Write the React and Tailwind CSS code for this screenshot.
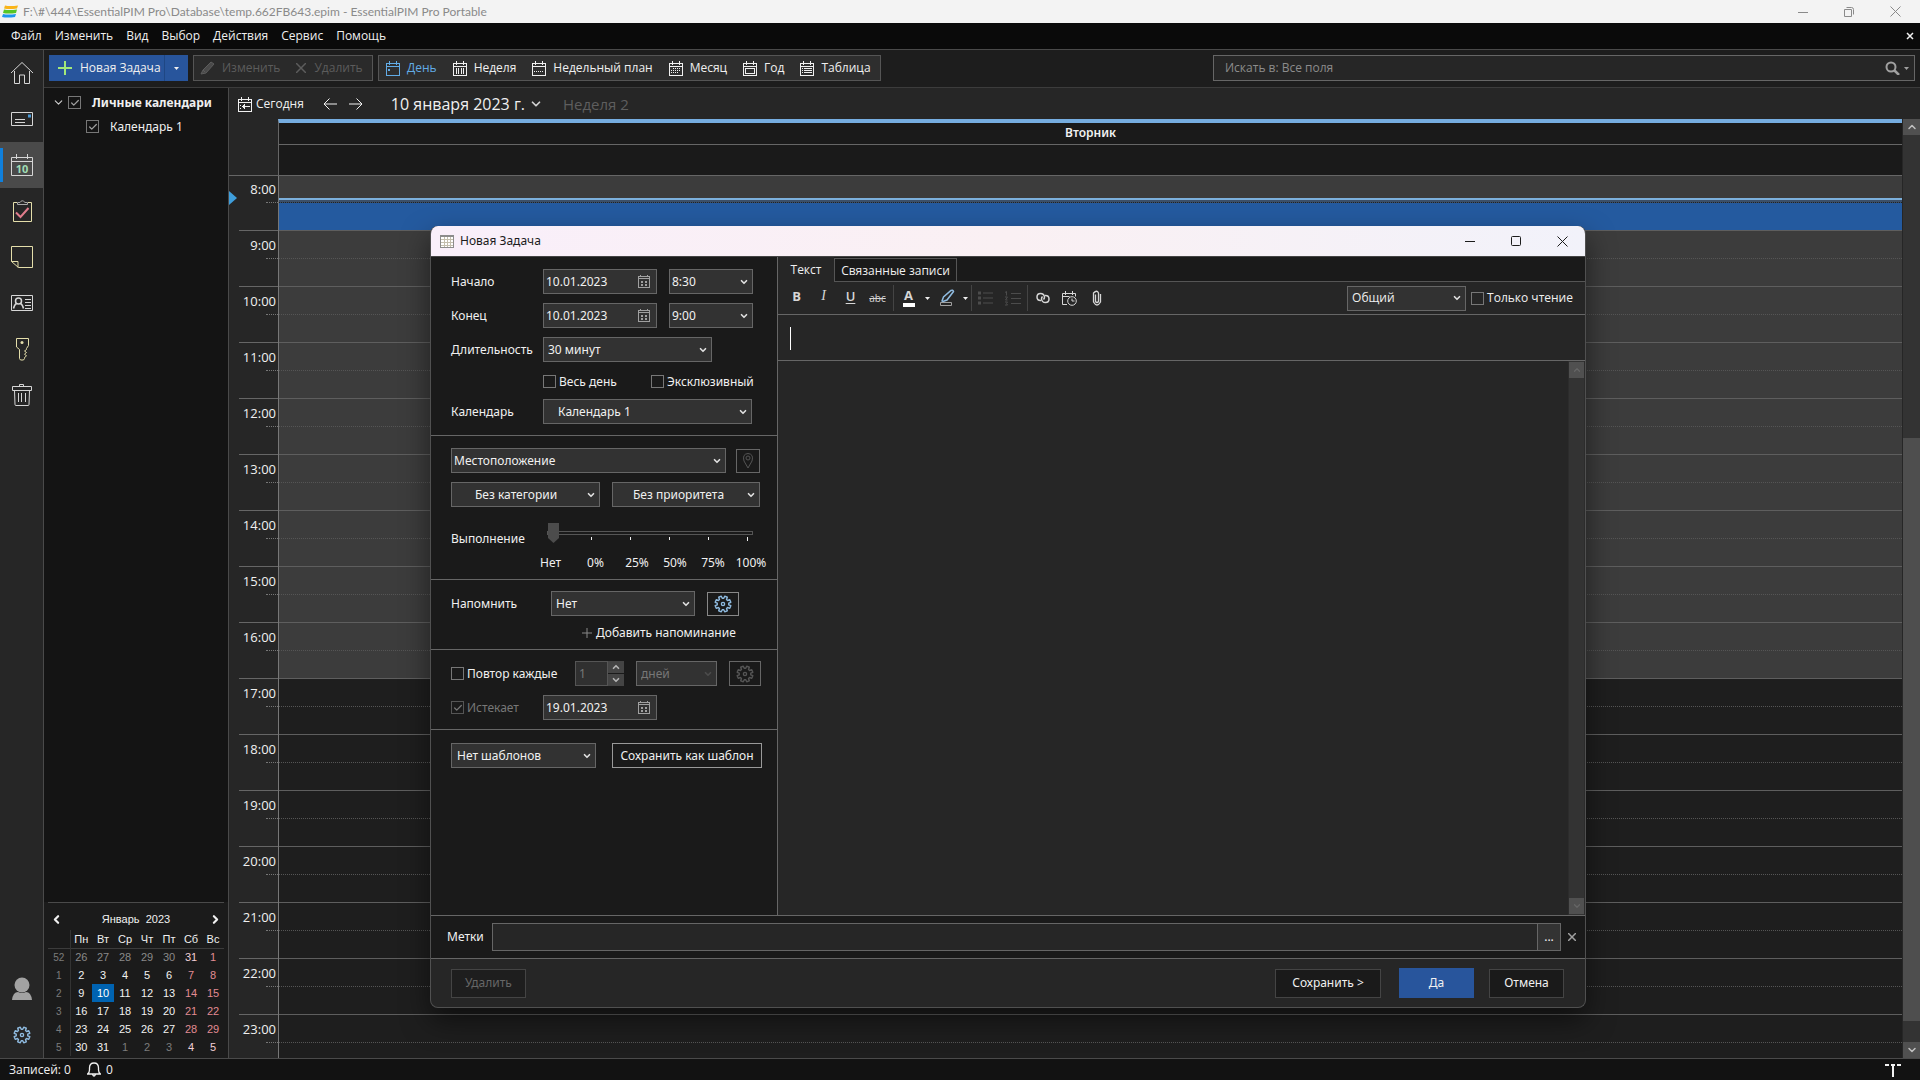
import React, { useState } from "react";
import { Check, ChevronDown, ChevronLeft, ChevronRight, ChevronUp } from "lucide-react";

const MENU = ["Файл", "Изменить", "Вид", "Выбор", "Действия", "Сервис", "Помощь"];

const VIEWS = [
  { id: "day", label: "День" },
  { id: "week", label: "Неделя" },
  { id: "plan", label: "Недельный план" },
  { id: "month", label: "Месяц" },
  { id: "year", label: "Год" },
  { id: "table", label: "Таблица" },
];

const HOURS = [9, 10, 11, 12, 13, 14, 15, 16, 17, 18, 19, 20, 21, 22, 23];

const WEEKDAYS = ["Пн", "Вт", "Ср", "Чт", "Пт", "Сб", "Вс"];

// Each row starts with the week number
const WEEKS = [
  [52, 26, 27, 28, 29, 30, 31, 1],
  [1, 2, 3, 4, 5, 6, 7, 8],
  [2, 9, 10, 11, 12, 13, 14, 15],
  [3, 16, 17, 18, 19, 20, 21, 22],
  [4, 23, 24, 25, 26, 27, 28, 29],
  [5, 30, 31, 1, 2, 3, 4, 5],
];

/* ---------- icons ---------- */

function Icon({ w = 24, h = 24, children, ...props }) {
  return (
    <svg width={w} height={h} viewBox={`0 0 ${w} ${h}`} fill="none" stroke="currentColor" aria-hidden="true" {...props}>
      {children}
    </svg>
  );
}

// Eight teeth, four points per tooth
const GEAR_POINTS = Array.from({ length: 32 }, (_, i) => {
  const angle = ((Math.floor(i / 4) * 45 + 22.5 + [-15, -10, 10, 15][i % 4]) * Math.PI) / 180;
  const r = i % 4 === 0 || i % 4 === 3 ? 5.8 : 8;
  return `${(9 + r * Math.cos(angle)).toFixed(2)},${(9 + r * Math.sin(angle)).toFixed(2)}`;
}).join(" ");

function GearIcon() {
  return (
    <Icon w={18} h={18} strokeWidth="1.4">
      <polygon points={GEAR_POINTS} strokeLinejoin="round" />
      <circle cx="9" cy="9" r="1.6" />
    </Icon>
  );
}

function ViewIcon({ type }) {
  return (
    <Icon w={14} h={15} shapeRendering="crispEdges">
      <path d="M.5 2.500h13v12H.5zM.5 5.500h13M3.500 0v4M10.500 0v4" />
      {type === "day" && <path d="M2 8.500h2M2 9.500h2" />}
      {type === "week" && <path d="M3.500 7v6M5.500 7v6M8.500 7v6M10.500 7v6" />}
      {type === "plan" && <path d="M2 10.500h10" strokeDasharray="1 1" />}
      {type === "month" && <path d="M4 7.500h8M2 9.500h10M2 11.500h8" strokeDasharray="1 1" />}
      {type === "year" && <path d="M2.500 7.500h9v5h-9z" />}
      {type === "table" && <path d="M4 7.500h8M4 9.500h8M4 11.500h8M2 7.500h1M2 9.500h1M2 11.500h1" />}
      {type === "today" && <path d="M4 9.500h8M5.500 8v3M6.500 7v5M2 8.500h1M2 11.500h1" />}
    </Icon>
  );
}

function DateIcon() {
  return (
    <Icon w={12} h={13} shapeRendering="crispEdges" className="text-[#a0a0a0]">
      <path d="M.5 1.500h11v11H.5zM.5 3.500h11M2.500 0v2M9.500 0v2" />
      <path d="M3 6.500h2M7 6.500h2M3 9.500h2M7 9.500h2M3 7.500h2M7 7.500h2M3 10.500h2M7 10.500h2" />
    </Icon>
  );
}

function Caret({ className }) {
  return (
    <svg width="5" height="3" viewBox="0 0 5 3" className={className} aria-hidden="true">
      <path d="M0 0h5L2.500 3z" fill="currentColor" />
    </svg>
  );
}

const SIDEBAR = [
  {
    label: "Главная",
    icon: (
      <Icon className="text-[#d6d6d6]">
        <path d="M1 12 12 1.500 23 12M4.500 10v12.500h5V14h5v8.500h5V10" />
      </Icon>
    ),
  },
  {
    label: "Почта",
    icon: (
      <Icon w={24} h={16} className="text-[#d6d6d6]">
        <path d="M1.500 1.500h21v13h-21zM5 8.500h10M5 11.500h10" />
        <path d="M18 3.500h3v3h-3z" fill="#4a9bd8" stroke="none" />
      </Icon>
    ),
  },
  {
    label: "Календарь",
    active: true,
    icon: (
      <Icon className="text-[#d6d6d6]">
        <path d="M1.500 4.500h21v18h-21zM1.500 8.500h21M6.500 1v5M17.500 1v5" />
        <text x="12" y="19.500" textAnchor="middle" fontSize="11" fontWeight="bold" fill="#9fdcb4" stroke="none">
          10
        </text>
      </Icon>
    ),
  },
  {
    label: "Задачи",
    icon: (
      <Icon className="text-[#e4deaa]">
        <path d="M7 3.500H3.500v19h18v-19H18" />
        <path d="M7.500 5.500v-2h2.500q2-3.500 5 0h2.500v2z" stroke="#a9a9a9" />
        <path d="m6 13.500 4.500 4.500 8-9" stroke="#e07c8c" strokeWidth="2" />
      </Icon>
    ),
  },
  {
    label: "Заметки",
    icon: (
      <Icon className="text-[#e4deaa]">
        <path d="M1.500 16.500v-15h21v21h-14zM1.500 16.500h6.500v6" />
      </Icon>
    ),
  },
  {
    label: "Контакты",
    icon: (
      <Icon w={24} h={18} className="text-[#d6d6d6]">
        <path d="M1.500 1.500h21v15h-21zM15 5.500h6M15 8.500h6M15 11.500h6M15 14.500h6" />
        <circle cx="8.500" cy="7" r="3" strokeWidth="1.500" />
        <path d="M3.500 14.500q1-4 3-5M13.500 14.500q-1-4-3-5" strokeWidth="1.500" />
      </Icon>
    ),
  },
  {
    label: "Пароли",
    icon: (
      <Icon w={16} h={24} className="text-[#e4deaa]">
        <path d="M2.500 1.500h12v7l-2 3v1l-2 1.500 2 1.500-2 1.500 2 2-2 1.500v1l-1 1.500h-3l-1-1.500v-9l-3-2.500z" />
        <circle cx="8" cy="5.500" r="1.500" fill="currentColor" stroke="none" />
      </Icon>
    ),
  },
  {
    label: "Корзина",
    icon: (
      <Icon w={20} h={24} className="text-[#d6d6d6]">
        <path d="M.5 3.500h19v4H.5zM2.500 7.500l.5 14q0 1 1 1h12q1 0 1-1l.5-14M7.500 3.500v-2h4v2M6.500 10v9M9.500 10v9M13.500 10v9" />
      </Icon>
    ),
  },
];

/* ---------- form controls ---------- */

function Select({ label, value, className = "", textClass = "pl-1", disabled }) {
  return (
    <div className={`relative flex h-[25px] shrink-0 items-center border border-[#666] bg-[#323232] ${className}`}>
      <select
        aria-label={label}
        disabled={disabled}
        defaultValue={value}
        className={`h-full w-full appearance-none bg-transparent pr-5 outline-none disabled:text-[#777] disabled:opacity-100 ${textClass}`}
      >
        <option>{value}</option>
      </select>
      <ChevronDown
        size={10}
        strokeWidth={4}
        className={`pointer-events-none absolute right-[3px] ${disabled ? "text-[#4c4c4c]" : "text-[#e0e0e0]"}`}
      />
    </div>
  );
}

function DateField({ id, label, value }) {
  return (
    <div className="flex h-[25px] w-[114px] items-center justify-between border border-[#666] bg-[#323232] pr-[6px] pl-[2px]">
      <input id={id} aria-label={label} defaultValue={value} className="w-20 bg-transparent outline-none" />
      <DateIcon />
    </div>
  );
}

function CheckBox({ label, checked = false, disabled, className = "gap-[3px]" }) {
  return (
    <label className={`flex items-center whitespace-nowrap ${disabled ? "text-[#777]" : ""} ${className}`}>
      <span className="relative flex size-[13px] shrink-0 items-center justify-center">
        <input
          type="checkbox"
          defaultChecked={checked}
          disabled={disabled}
          className="peer absolute inset-0 appearance-none border border-[#777] disabled:border-[#555]"
        />
        <Check size={10} strokeWidth={3} className="pointer-events-none relative hidden text-[#a0a0a0] peer-checked:block peer-disabled:text-[#777]" />
      </span>
      {label}
    </label>
  );
}

function IconButton({ label, className = "", children, ...props }) {
  return (
    <button aria-label={label} className={`flex items-center justify-center ${className}`} {...props}>
      {children}
    </button>
  );
}

function ScrollBar({ className = "", children }) {
  return (
    <div className={`flex shrink-0 flex-col bg-[#333] ${className}`}>
      {children}
    </div>
  );
}

/* ---------- main window ---------- */

function TitleBar() {
  return (
    <header className="flex h-[23px] shrink-0 items-center bg-[#f3f3f3] pr-[2px] text-[#8a8a8a]">
      <svg width="16" height="13" viewBox="0 0 16 13" className="ml-[2px]" aria-hidden="true">
        <path d="M3 .5q5 1 13 0l-1 3q-8 1-13 0z" fill="#f9b418" />
        <path d="M2 4.500q5 1 13 0l-1 3.500q-8 1-13 0z" fill="#57c626" />
        <path d="M1 9q5 1 13 0l-1 3q-8 1-13 0z" fill="#1e96ee" />
      </svg>
      <span className="ml-[5px] grow truncate font-['Lato','Open_Sans',sans-serif]">
        F:\#\444\EssentialPIM Pro\Database\temp.662FB643.epim - EssentialPIM Pro Portable
      </span>
      <IconButton label="Свернуть" className="h-full w-[46px]">
        <Icon w={10} h={10}><path d="M0 5.500h10" /></Icon>
      </IconButton>
      <IconButton label="Восстановить" className="h-full w-[46px]">
        <Icon w={10} h={10}><path d="M.5 2.500h7v7h-7zM2.500.5h5q2 0 2 2v5" /></Icon>
      </IconButton>
      <IconButton label="Закрыть" className="h-full w-[46px]">
        <Icon w={11} h={11}><path d="m.5.5 10 10M10.500.5l-10 10" /></Icon>
      </IconButton>
    </header>
  );
}

function MenuBar() {
  return (
    <nav className="flex h-[27px] shrink-0 items-center gap-[13px] border-b border-[#4a4a4a] bg-[#0a0a0a] pr-[6px] pl-[11px]">
      {MENU.map((item) => (
        <button key={item}>{item}</button>
      ))}
      <IconButton label="Закрыть вкладку" className="ml-auto">
        <Icon w={8} h={8} strokeWidth="1.500"><path d="m1 1 6 6M7 1 1 7" /></Icon>
      </IconButton>
    </nav>
  );
}

function SideBar() {
  return (
    <aside className="flex w-11 shrink-0 flex-col border-r border-[#4a4a4a] bg-[#262626]">
      {SIDEBAR.map((item) => (
        <button
          key={item.label}
          aria-label={item.label}
          className={`relative flex h-[46px] items-center justify-center ${item.active ? "bg-[#4a4a4a]" : ""}`}
        >
          {item.active && <span className="absolute top-[6px] bottom-[6px] left-0 w-[3px] bg-[#0f80dd]" />}
          {item.icon}
        </button>
      ))}
      <IconButton label="Профиль" className="mt-auto h-[46px]">
        <Icon w={22} h={24} stroke="none">
          <circle cx="11" cy="8" r="7.500" fill="#a2a2a2" />
          <path d="M1 23q1-8 6-8 4 2 8 0 5 0 6 8z" fill="#a2a2a2" />
        </Icon>
      </IconButton>
      <IconButton label="Настройки" className="h-[46px] text-[#8fbbe0]">
        <GearIcon />
      </IconButton>
    </aside>
  );
}

function ToolBar({ view, onView }) {
  return (
    <div className="flex h-[38px] shrink-0 items-center border-b border-[#3c3c3c] bg-[#1d1d1d] px-[5px] pb-px">
      <div className="flex h-[26px] bg-[#28559c]">
        <button className="flex w-[116px] items-center gap-2 border-r border-[#1f4784] pl-[9px] whitespace-nowrap">
          <Icon w={14} h={14} strokeWidth="2" className="shrink-0 text-[#a3e87a]"><path d="M7 0v14M0 7h14" /></Icon>
          Новая Задача
        </button>
        <IconButton label="Другие записи" className="w-[23px]"><Caret /></IconButton>
      </div>
      <div className="ml-[5px] flex h-[26px] w-[180px] items-center border border-[#555] bg-[#2a2a2a] pl-[6px] text-[#5c5c5c]">
        <button disabled className="flex items-center gap-[7px]">
          <Icon w={15} h={14}><path d="m1 13 2-4 8-8 3 2-8 9zM3 9l2 2" fill="#4a4a4a" /></Icon>
          Изменить
        </button>
        <button disabled className="ml-4 flex items-center gap-2">
          <Icon w={10} h={10} strokeWidth="1.500"><path d="m0 0 10 10M10 0 0 10" /></Icon>
          Удалить
        </button>
      </div>
      <div className="ml-[5px] flex h-[26px] items-center gap-4 border border-[#555] bg-[#2e2e2e] pr-[9px] pl-[7px]">
        {VIEWS.map((v) => (
          <button
            key={v.id}
            onClick={() => onView(v.id)}
            className={`flex items-center gap-[7px] whitespace-nowrap ${view === v.id ? "text-[#62ace6]" : ""}`}
          >
            <ViewIcon type={v.id} />
            {v.label}
          </button>
        ))}
      </div>
      <div className="ml-auto flex h-[26px] w-[702px] items-center border border-[#666] bg-[#262626] pr-[5px] pl-[11px]">
        <input
          aria-label="Поиск"
          placeholder="Искать в: Все поля"
          className="grow bg-transparent outline-none placeholder:text-[#8c8c8c]"
        />
        <IconButton label="Найти" className="text-[#a0a0a0]">
          <Icon w={15} h={14} strokeWidth="2"><circle cx="6" cy="6" r="4.500" /><path d="m9 9 5 5" strokeWidth="2.500" /></Icon>
        </IconButton>
        <IconButton label="Область поиска" className="ml-1 text-[#a0a0a0]"><Caret /></IconButton>
      </div>
    </div>
  );
}

function MiniCalendar() {
  const dayColor = (week, col) => {
    if (week === 0 && col < 5) return "text-[#8a8a8a]";
    if (week === 0 && col === 5) return "text-[#f2cfd6]";
    if (week === 5 && col > 4) return "text-[#f2cfd6]";
    if (week === 5 && col > 1) return "text-[#7c7c7c]";
    if (col > 4) return "text-[#e28b93]";
    return "text-[#f2f2f2]";
  };

  return (
    <section className="mx-1 border-t border-[#4a4a4a] font-['Liberation_Sans',sans-serif] text-[11px]">
      <div className="flex h-[27px] items-center justify-between px-[2px] pt-[5px]">
        <button aria-label="Предыдущий месяц"><ChevronLeft size={13} strokeWidth={4} /></button>
        <span>Январь&nbsp; 2023</span>
        <button aria-label="Следующий месяц"><ChevronRight size={13} strokeWidth={4} /></button>
      </div>
      <table className="w-full table-fixed border-collapse text-center">
        <thead>
          <tr className="h-[18px] border-b border-[#3c3c3c]">
            <th className="w-[22px] border-r border-[#333]" aria-label="Неделя" />
            {WEEKDAYS.map((d) => (
              <th key={d} className="font-normal">{d}</th>
            ))}
          </tr>
        </thead>
        <tbody>
          {WEEKS.map(([num, ...days], week) => (
            <tr key={num} className="h-[18px]">
              <td className="border-r border-[#333] text-[10px] text-[#7c7c7c]">{num}</td>
              {days.map((day, col) => (
                <td key={col} className={day === 10 ? "bg-[#0063b1] text-white" : dayColor(week, col)}>
                  {day}
                </td>
              ))}
            </tr>
          ))}
        </tbody>
      </table>
      <div className="h-[2px]" />
    </section>
  );
}

function CalendarTree() {
  return (
    <aside className="flex w-[185px] shrink-0 flex-col border-r border-[#4a4a4a] bg-[#141414] font-['Noto_Sans',sans-serif]">
      <div className="flex h-[27px] items-center pt-[2px] pl-2">
        <ChevronDown size={13} className="mr-[3px] text-[#d0d0d0]" />
        <CheckBox label="Личные календари" checked className="gap-[11px] font-bold" />
      </div>
      <div className="flex h-[23px] items-center pl-[42px]">
        <CheckBox label="Календарь 1" checked className="gap-[11px]" />
      </div>
      <div className="mt-auto bg-[#1b1b1b]">
        <MiniCalendar />
      </div>
    </aside>
  );
}

function HourRow({ hour }) {
  const isWork = hour < 17;
  return (
    <div className="flex h-[56px] shrink-0">
      <div className="flex w-[49px] shrink-0 flex-col pl-[10px]">
        <div className="h-7 border-t border-[#666] pt-[5px] pr-[2px] text-right text-[13px] leading-[18px]">{hour}:00</div>
        <div className="ml-auto w-3 border-t border-dotted border-[#777]" />
      </div>
      <div className={`grow border-l border-[#777] ${isWork ? "bg-[#3c3c3c]" : "bg-[#1e1e1e]"}`}>
        <div className="h-7 border-t border-[#5e5e5e]" />
        <div className="border-t border-dotted border-[#555]" />
      </div>
    </div>
  );
}

function DayView() {
  return (
    <main className="flex min-w-0 grow flex-col bg-[#262626]">
      <div className="flex h-[31px] shrink-0 items-center pt-px pl-[9px]">
        <button className="flex items-center gap-1"><ViewIcon type="today" />Сегодня</button>
        <IconButton label="Назад" className="ml-[19px]">
          <Icon w={14} h={12}><path d="M14 6H1M6.500.5 1 6l5.500 5.500" /></Icon>
        </IconButton>
        <IconButton label="Вперёд" className="ml-3">
          <Icon w={14} h={12}><path d="M0 6h13M7.500.5 13 6l-5.500 5.500" /></Icon>
        </IconButton>
        <button className="ml-7 flex items-center gap-1 text-base">
          10 января 2023 г.
          <ChevronDown size={14} strokeWidth={3} className="text-[#d0d0d0]" />
        </button>
        <span className="ml-5 text-[15px] text-[#5e5e5e]">Неделя 2</span>
      </div>
      <div className="flex min-h-0 grow">
        <div className="flex min-w-0 grow flex-col overflow-hidden">
          <div className="flex h-[57px] shrink-0 border-b border-[#666]">
            <div className="w-[49px] shrink-0" />
            <div className="grow border-t-4 border-l border-t-[#76ade0] border-l-[#666] bg-[#1a1a1a]">
              <div className="flex h-[22px] items-center justify-center border-b border-[#666] pb-[2px] font-['Noto_Sans',sans-serif] font-semibold">Вторник</div>
            </div>
          </div>
          <div className="flex h-[54px] shrink-0">
            <div className="relative flex w-[49px] shrink-0 flex-col">
              <div className="h-[26px] pt-1 pr-[2px] text-right text-[13px] leading-[18px] font-medium">8:00</div>
              <div className="ml-auto w-3 border-t border-dotted border-[#777]" />
              <svg width="8" height="14" className="absolute top-[15px] left-0" aria-hidden="true">
                <path d="M0 0l8 7-8 7z" fill="#3f9edb" />
              </svg>
            </div>
            <div className="flex grow flex-col border-l border-[#777] bg-[#3c3c3c]">
              <div className="mt-[22px] h-[2px] bg-[#7cb0dc]" />
              <div className="h-[3px] border-b border-dotted border-[#222] bg-[#3b4f68]" />
              <div className="grow bg-[#245a9f]" />
            </div>
          </div>
          {HOURS.map((hour) => <HourRow key={hour} hour={hour} />)}
        </div>
        <ScrollBar className="ml-px w-[17px]">
          <IconButton label="Вверх" className="h-4 bg-[#505050] text-[#c0c0c0]"><ChevronUp size={12} strokeWidth={3} /></IconButton>
          <div className="h-[303px]" />
          <div className="grow bg-[#4e4e4e]" />
          <div className="h-[21px]" />
          <IconButton label="Вниз" className="h-4 bg-[#505050] text-[#c0c0c0]"><ChevronDown size={12} strokeWidth={3} /></IconButton>
        </ScrollBar>
      </div>
    </main>
  );
}

function StatusBar() {
  return (
    <footer className="flex h-[22px] shrink-0 items-center border-t border-[#4a4a4a] bg-[#121212] pr-[19px] pl-[9px]">
      <span>Записей: 0</span>
      <Icon w={14} h={15} strokeWidth="1.300" className="mr-[5px] ml-4">
        <path d="M.5 12q2-1.500 2-4V6q0-5 4.500-5t4.500 5v2q0 2.500 2 4zM5.500 12.500q1.500 3 3 0" />
      </Icon>
      <span>0</span>
      <Icon w={16} h={14} strokeWidth="2" className="ml-auto text-[#f2f2f2]" shapeRendering="crispEdges">
        <path d="M0 2h4M6 2h4M12 2h4M8 3v11" />
      </Icon>
    </footer>
  );
}

/* ---------- task dialog ---------- */

function Row({ label, htmlFor, children }) {
  return (
    <div className="flex h-[25px] items-center">
      <label htmlFor={htmlFor} className="w-[92px] shrink-0 whitespace-nowrap">{label}</label>
      {children}
    </div>
  );
}

function TaskForm() {
  const [progress, setProgress] = useState(0);

  return (
    <div className="w-[347px] shrink-0 border-r border-[#666] bg-[#1a1a1a] font-['Noto_Sans',sans-serif]">
      <section className="flex flex-col gap-[9px] border-b border-[#666] pt-3 pb-[11px] pl-5">
        <Row label="Начало" htmlFor="start">
          <DateField id="start" value="10.01.2023" />
          <Select label="Время начала" value="8:30" className="ml-3 w-[84px]" textClass="pl-[2px]" />
        </Row>
        <Row label="Конец" htmlFor="end">
          <DateField id="end" value="10.01.2023" />
          <Select label="Время окончания" value="9:00" className="ml-3 w-[84px]" textClass="pl-[2px]" />
        </Row>
        <Row label="Длительность">
          <Select label="Длительность" value="30 минут" className="w-[169px]" />
        </Row>
        <div className="flex h-[19px] items-center pt-[2px] pl-[92px]">
          <div className="w-[108px]"><CheckBox label="Весь день" /></div>
          <CheckBox label="Эксклюзивный" />
        </div>
        <Row label="Календарь">
          <Select label="Календарь" value="Календарь 1" className="w-[209px]" textClass="pl-[14px]" />
        </Row>
      </section>

      <section className="flex flex-col gap-[9px] border-b border-[#666] pt-3 pb-2 pl-5">
        <div className="flex items-center gap-[10px]">
          <Select label="Местоположение" value="Местоположение" className="w-[275px]" textClass="pl-[2px]" />
          <IconButton label="Показать на карте" className="size-6 border border-[#666] text-[#555]">
            <Icon w={12} h={16}><path d="M6 15 2 8Q0 1 6 .5 12 1 10 8z" /><circle cx="6" cy="5" r="2" /></Icon>
          </IconButton>
        </div>
        <div className="flex gap-3">
          <Select label="Категория" value="Без категории" className="w-[149px]" textClass="pl-[23px]" />
          <Select label="Приоритет" value="Без приоритета" className="w-[148px]" textClass="pl-5" />
        </div>
        <div>
          <div className="flex h-[39px] items-start">
            <label htmlFor="progress" className="w-24 pt-[14px]">Выполнение</label>
            <div className="w-[206px] pt-[7px]">
              <input
                id="progress"
                type="range"
                min="0"
                max="5"
                value={progress}
                onChange={(e) => setProgress(e.target.value)}
                className="block h-5 w-full appearance-none bg-transparent [&::-webkit-slider-runnable-track]:h-1 [&::-webkit-slider-runnable-track]:border [&::-webkit-slider-runnable-track]:border-[#555] [&::-webkit-slider-thumb]:-mt-[9px] [&::-webkit-slider-thumb]:h-5 [&::-webkit-slider-thumb]:w-[11px] [&::-webkit-slider-thumb]:appearance-none [&::-webkit-slider-thumb]:bg-[#4c4c4c] [&::-webkit-slider-thumb]:[clip-path:polygon(0_0,100%_0,100%_75%,50%_100%,0_75%)]"
              />
              <Icon w={206} h={4} className="-mt-[6px]" shapeRendering="crispEdges">
                <path d="M44.500 0v3M83.500 0v3M122.500 0v3M161.500 0v3M200.500 0v4" />
              </Icon>
            </div>
          </div>
          <div className="grid h-4 grid-cols-[45px_45px_38px_38px_38px_38px] items-center pl-[77px] text-center leading-4">
            <span>Нет</span>
            <span>0%</span>
            <span>25%</span>
            <span>50%</span>
            <span>75%</span>
            <span>100%</span>
          </div>
        </div>
      </section>

      <section className="flex flex-col gap-[9px] border-b border-[#666] pt-[11px] pb-[9px] pl-5">
        <div className="flex h-[25px] items-center">
          <span className="w-[100px]">Напомнить</span>
          <Select label="Напомнить" value="Нет" className="w-36" />
          <IconButton label="Настройки напоминания" className="ml-3 h-6 w-8 border border-[#888] text-[#8fbbe0]"><GearIcon /></IconButton>
        </div>
        <button className="flex h-[15px] items-center gap-1 pl-[131px] leading-4 whitespace-nowrap">
          <Icon w={10} h={10} className="text-[#888]"><path d="M5 0v10M0 5h10" /></Icon>
          Добавить напоминание
        </button>
      </section>

      <section className="flex flex-col gap-[9px] border-b border-[#666] pt-[11px] pb-[9px] pl-5">
        <div className="flex h-[25px] items-center">
          <div className="w-[124px]"><CheckBox label="Повтор каждые" /></div>
          <input aria-label="Интервал повтора" disabled defaultValue="1" className="h-[25px] w-[33px] border border-[#555] bg-[#303030] pl-[3px] text-[#777]" />
          <div className="flex h-[25px] w-4 flex-col gap-px">
            <IconButton label="Больше" className="h-3 bg-[#444] text-[#b5b5b5]"><ChevronUp size={10} strokeWidth={4} /></IconButton>
            <IconButton label="Меньше" className="h-3 bg-[#444] text-[#b5b5b5]"><ChevronDown size={10} strokeWidth={4} /></IconButton>
          </div>
          <Select label="Единица повтора" value="дней" disabled className="ml-3 w-[81px]" />
          <IconButton label="Настройки повтора" disabled className="ml-3 h-[25px] w-8 border border-[#666] text-[#555]"><GearIcon /></IconButton>
        </div>
        <div className="flex h-[25px] items-center">
          <div className="w-[92px]"><CheckBox label="Истекает" checked disabled /></div>
          <DateField id="expires" label="Дата окончания повтора" value="19.01.2023" />
        </div>
      </section>

      <section className="flex items-center pt-[13px] pl-5">
        <Select label="Шаблон" value="Нет шаблонов" className="w-[145px]" textClass="pl-[5px]" />
        <button className="ml-4 h-[25px] w-[150px] border border-[#999] whitespace-nowrap">Сохранить как шаблон</button>
      </section>
    </div>
  );
}

function EditorToolbar() {
  const btn = "h-[26px] w-[27px] text-[#d6d6d6]";
  return (
    <div className="flex h-[33px] shrink-0 items-center border-b border-[#666] pr-3 pl-[5px]">
      <IconButton label="Полужирный" className={btn}><b className="pb-1 text-[13px] leading-none">B</b></IconButton>
      <IconButton label="Курсив" className={btn}><i className="pb-1 font-['Liberation_Serif',serif] text-[14px] leading-none">I</i></IconButton>
      <IconButton label="Подчёркнутый" className={btn}><b className="pb-1 text-[13px] leading-none font-semibold underline underline-offset-2">U</b></IconButton>
      <IconButton label="Зачёркнутый" className={btn}><s className="text-[10px] leading-none">abc</s></IconButton>
      <span className="mr-px h-[26px] w-[3px] border-r border-[#444]" />
      <IconButton label="Цвет текста" className={btn}>
        <span className="flex flex-col items-center gap-px"><b className="text-[13px] leading-[13px]">A</b><span className="h-1 w-3 bg-white" /></span>
      </IconButton>
      <IconButton label="Выбрать цвет текста" className="h-6 w-[11px]"><Caret /></IconButton>
      <IconButton label="Выделение" className={btn}>
        <Icon w={16} h={18}>
          <path d="m3 12 1.500-4L12 1.500q2-1 2.500 1L8 11l-4 1.500z" stroke="#8fbbe0" strokeWidth="1.500" />
          <path d="M1.500 13.500h11v3h-11z" stroke="#a0a0a0" />
        </Icon>
      </IconButton>
      <IconButton label="Выбрать цвет выделения" className="h-6 w-[11px]"><Caret /></IconButton>
      <span className="h-[26px] w-px bg-[#444]" />
      <IconButton label="Маркированный список" disabled className="h-[26px] w-[27px] text-[#4c4c4c]">
        <Icon w={15} h={14}><path d="M5 2h10M5 7h10M5 12h10" /><path d="M0 2h3M0 7h3M0 12h3" strokeWidth="3" /></Icon>
      </IconButton>
      <IconButton label="Нумерованный список" disabled className="h-[26px] w-[27px] text-[#4c4c4c]">
        <Icon w={16} h={15}><path d="M6 2.500h10M6 7.500h10M6 12.500h10M0 1.500 1.500.5v4M0 6h2.500L.5 9h2M0 11h2.500l-1 1.500 1 1.500H0" /></Icon>
      </IconButton>
      <span className="mr-px h-[26px] w-[2px] border-r border-[#444]" />
      <IconButton label="Ссылка" className={btn}>
        <Icon w={14} h={12} strokeWidth="1.500">
          <path d="M5 8.500H4.500Q1 8.500 1 5t3.500-3.500Q8 1.500 8.500 5q0 1.500-1 2.500" />
          <path d="M9 3.500h.5Q13 3.500 13 7t-3.500 3.500Q6 10.500 5.500 7q0-1.500 1-2.500" />
        </Icon>
      </IconButton>
      <IconButton label="Вставить дату и время" className={btn}>
        <Icon w={15} h={15}>
          <path d="M5 13.500H.5v-11h13v3M.5 5.500h7M3.500 0v4M10.500 0v4" />
          <circle cx="10" cy="10" r="4.300" /><path d="M10 7.500V10h2.500" />
        </Icon>
      </IconButton>
      <IconButton label="Вложение" className={btn}>
        <Icon w={10} h={17}><path d="M3.500 4.500v7q1.500 2 3 0V3Q5-.5 1.500 3v9q3.500 6 7 0V4" strokeWidth="1.300" /></Icon>
      </IconButton>
      <Select label="Стиль" value="Общий" className="ml-auto w-[119px]" />
      <CheckBox label="Только чтение" className="ml-[5px] gap-[3px]" />
    </div>
  );
}

function TaskEditor() {
  return (
    <div className="flex min-w-0 grow flex-col bg-[#262626]">
      <div className="flex h-[25px] shrink-0 bg-[#1a1a1a]" role="tablist">
        <button role="tab" aria-selected="true" className="w-14 bg-[#262626]">Текст</button>
        <button role="tab" aria-selected="false" className="mt-px w-[123px] border border-[#555] pt-px whitespace-nowrap">Связанные записи</button>
        <div className="grow border-b border-[#555]" />
      </div>
      <EditorToolbar />
      <div className="flex h-[46px] shrink-0 items-center border-b border-[#666] pt-px pl-3">
        <span className="h-[23px] w-px bg-white" />
        <input aria-label="Название задачи" className="h-6 grow bg-transparent outline-none" />
      </div>
      <div className="flex min-h-0 grow">
        <textarea aria-label="Текст задачи" className="grow resize-none bg-transparent p-3 outline-none" />
        <ScrollBar className="w-[17px] justify-between border-x border-[#2c2c2c] pt-px pb-px">
          <IconButton label="Вверх" className="h-4 bg-[#505050] text-[#666]"><ChevronUp size={10} strokeWidth={3} /></IconButton>
          <IconButton label="Вниз" className="h-4 bg-[#505050] text-[#666]"><ChevronDown size={10} strokeWidth={3} /></IconButton>
        </ScrollBar>
      </div>
    </div>
  );
}

function TaskDialog() {
  return (
    <div
      role="dialog"
      aria-label="Новая Задача"
      className="absolute top-[226px] right-[334px] bottom-[72px] left-[430px] flex flex-col overflow-hidden rounded-lg border border-t-0 border-[#505050] bg-[#262626] shadow-[0_12px_28px_rgba(0,0,0,0.5)]"
    >
      <div className="flex h-[30px] shrink-0 items-center bg-gradient-to-r from-[#f9effa] via-[#faf0f3] to-[#f2f2fa] font-['Noto_Sans',sans-serif] text-[#1c1c1c]">
        <Icon w={14} h={13} shapeRendering="crispEdges" className="mr-[6px] ml-[9px] text-[#c4bfae]">
          <path d="M.5.5h13v12H.5z" fill="#fff" stroke="#8c8c8c" />
          <path d="M1 1.500h12" stroke="#8c8c8c" />
          <path d="M1 4.500h12M1 7.500h12M1 10.500h12M4.500 2v10M7.500 2v10M10.500 2v10" />
        </Icon>
        <span className="grow">Новая Задача</span>
        <IconButton label="Свернуть" className="h-full w-[46px]"><Icon w={10} h={10}><path d="M0 5.500h10" /></Icon></IconButton>
        <IconButton label="Развернуть" className="h-full w-[46px]"><Icon w={10} h={10}><rect x=".5" y=".5" width="9" height="9" rx="1" /></Icon></IconButton>
        <IconButton label="Закрыть" className="h-full w-[46px]"><Icon w={11} h={11}><path d="m.5.5 10 10M10.500.5l-10 10" /></Icon></IconButton>
      </div>
      <div className="flex min-h-0 grow border-t border-[#444]">
        <TaskForm />
        <TaskEditor />
      </div>
      <div className="flex h-11 shrink-0 items-center border-y border-[#666] bg-[#1a1a1a] pr-[9px] pl-4 font-['Noto_Sans',sans-serif]">
        <label htmlFor="tags" className="w-[45px]">Метки</label>
        <input id="tags" className="h-7 grow border border-[#666] bg-[#262626] px-1 outline-none" />
        <button className="h-7 w-[23px] border border-l-0 border-[#666] bg-[#333]">...</button>
        <IconButton label="Очистить метки" className="ml-[7px] text-[#a0a0a0]">
          <Icon w={8} h={8} strokeWidth="1.500"><path d="m0 0 8 8M8 0 0 8" /></Icon>
        </IconButton>
      </div>
      <div className="flex h-[48px] shrink-0 items-center pr-[21px] pl-5 font-['Noto_Sans',sans-serif]">
        <button disabled className="h-[29px] w-[75px] border border-[#444] bg-[#1e1e1e] text-[#666]">Удалить</button>
        <button className="ml-auto h-[29px] w-[106px] border border-[#444] bg-[#1a1a1a]">Сохранить &gt;</button>
        <button className="ml-[18px] h-[30px] w-[75px] bg-[#28559c]">Да</button>
        <button className="ml-[15px] h-[29px] w-[75px] border border-[#444] bg-[#1a1a1a]">Отмена</button>
      </div>
    </div>
  );
}

export default function App() {
  const [view, setView] = useState("day");

  return (
    <div className="relative flex h-screen flex-col overflow-hidden bg-[#1a1a1a] font-['Open_Sans','Noto_Sans',sans-serif] text-[12px] text-[#f0f0f0]">
      <TitleBar />
      <MenuBar />
      <div className="flex min-h-0 grow">
        <SideBar />
        <div className="flex min-w-0 grow flex-col">
          <ToolBar view={view} onView={setView} />
          <div className="flex min-h-0 grow">
            <CalendarTree />
            <DayView />
          </div>
        </div>
      </div>
      <StatusBar />
      <TaskDialog />
    </div>
  );
}
